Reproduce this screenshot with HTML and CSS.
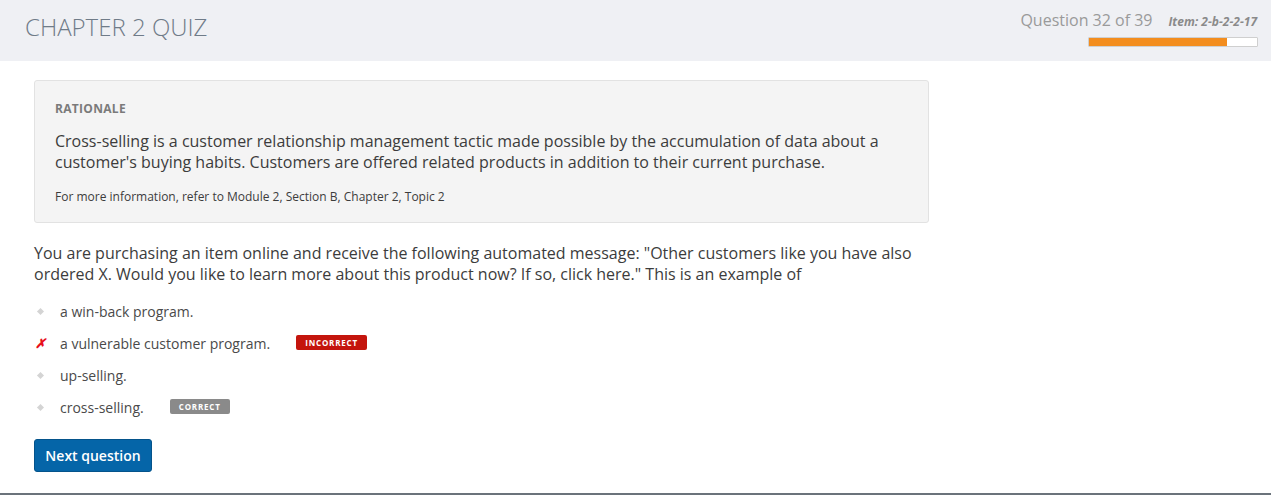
FILE: index.html
```html
<!DOCTYPE html>
<html>
<head>
<meta charset="utf-8">
<link rel="stylesheet" href="styles.css">
</head>
<body>
<header class="topbar">
  <h1 class="title">CHAPTER 2 QUIZ</h1>
  <div class="progress">
    <div class="progress-text">
      <span class="qnum">Question 32 of 39</span>
      <span class="item">Item: 2-b-2-2-17</span>
    </div>
    <div class="bar"><div class="fill" style="width:82%"></div></div>
  </div>
</header>
<main class="content">
  <section class="rationale">
    <div class="r-label">RATIONALE</div>
    <p class="r-text">Cross-selling is a customer relationship management tactic made possible by the accumulation of data about a customer's buying habits. Customers are offered related products in addition to their current purchase.</p>
    <p class="r-ref">For more information, refer to Module 2, Section B, Chapter 2, Topic 2</p>
  </section>
  <p class="question">You are purchasing an item online and receive the following automated message: "Other customers like you have also ordered X. Would you like to learn more about this product now? If so, click here." This is an example of</p>
  <ul class="options">
    <li class="opt"><span class="mark"><span class="dot"></span></span><span class="otext">a win-back program.</span></li>
    <li class="opt"><span class="mark x">✗</span><span class="otext">a vulnerable customer program.</span><span class="badge bad">INCORRECT</span></li>
    <li class="opt"><span class="mark"><span class="dot"></span></span><span class="otext">up-selling.</span></li>
    <li class="opt"><span class="mark"><span class="dot"></span></span><span class="otext">cross-selling.</span><span class="badge good">CORRECT</span></li>
  </ul>
  <button class="next">Next question</button>
</main>
<div class="footer-line"></div>
</body>
</html>
```
FILE: styles.css
```css
html, body {
  margin: 0;
  padding: 0;
  background: #ffffff;
  font-family: "Open Sans", "Liberation Sans", sans-serif;
  color: #3c3c3c;
}
body {
  height: 495px;
  display: flex;
  flex-direction: column;
  overflow: hidden;
}
.topbar {
  height: 61px;
  flex: none;
  background: #eff0f4;
  display: flex;
  justify-content: space-between;
  align-items: flex-start;
  padding: 0 13px 0 25px;
  box-sizing: border-box;
}
.title {
  margin: 10px 0 0 0;
  font-weight: 300;
  font-size: 24px;
  line-height: 34px;
  color: #6f7b88;
}
.progress {
  display: flex;
  flex-direction: column;
  align-items: flex-end;
  padding-top: 8px;
}
.progress-text {
  display: flex;
  align-items: baseline;
  gap: 16px;
}
.qnum {
  font-size: 16px;
  font-weight: 400;
  color: #9a9a9a;
  line-height: 24px;
}
.item {
  font-size: 12px;
  font-weight: 700;
  font-style: italic;
  color: #8a8a8a;
  padding-right: 1px;
}
.bar {
  margin-top: 5px;
  width: 168px;
  height: 8px;
  border: 1px solid #cfcfcf;
  background: #fff;
  border-radius: 1px;
}
.fill {
  height: 100%;
  background: #f38d1e;
}
.content {
  flex: 1;
  padding: 19px 0 0 34px;
  width: 895px;
}
.rationale {
  background: #f4f4f4;
  border: 1px solid #e2e2e2;
  border-radius: 3px;
  padding: 20px 20px 17px 20px;
}
.r-label {
  font-size: 12px;
  font-weight: 700;
  color: #7a7a7a;
  line-height: 16px;
  letter-spacing: 0.3px;
}
.r-text {
  margin: 14px 0 0 0;
  font-size: 16px;
  line-height: 21px;
  color: #3c3c3c;
}
.r-ref {
  margin: 15px 0 0 0;
  font-size: 12px;
  line-height: 17px;
  color: #3c3c3c;
}
.question {
  margin: 20px 0 0 0;
  font-size: 16px;
  line-height: 21px;
  color: #3c3c3c;
}
.options {
  list-style: none;
  margin: 10px 0 0 0;
  padding: 0;
}
.opt {
  display: flex;
  align-items: center;
  height: 32px;
}
.mark {
  width: 26px;
  display: flex;
  align-items: center;
  justify-content: flex-start;
  padding-left: 3px;
  box-sizing: border-box;
}
.dot {
  width: 5px;
  height: 5px;
  background: #d4d4d4;
  transform: rotate(45deg);
  margin-left: 1px;
}
.x {
  color: #e8101a;
  font-weight: 700;
  font-style: italic;
  font-size: 13px;
  padding-left: 1px;
}
.otext {
  font-size: 14px;
  color: #4a4a4a;
}
.badge {
  display: inline-block;
  font-size: 8px;
  font-weight: 700;
  letter-spacing: 0.8px;
  color: #fff;
  height: 15px;
  line-height: 15px;
  border-radius: 2px;
  text-align: center;
  margin-top: -2px;
}
.bad {
  background: #c4150d;
  width: 71px;
  margin-left: 26px;
}
.good {
  background: #8a8a8a;
  width: 60px;
  margin-left: 26px;
}
.next {
  margin-top: 16px;
  width: 118px;
  height: 33px;
  background: #0565a8;
  border: 1px solid #04538b;
  border-radius: 3px;
  color: #fff;
  font-family: "Open Sans", "Liberation Sans", sans-serif;
  font-size: 14px;
  font-weight: 600;
  padding: 0;
}
.footer-line {
  height: 2px;
  flex: none;
  background: #6b737b;
}
```
